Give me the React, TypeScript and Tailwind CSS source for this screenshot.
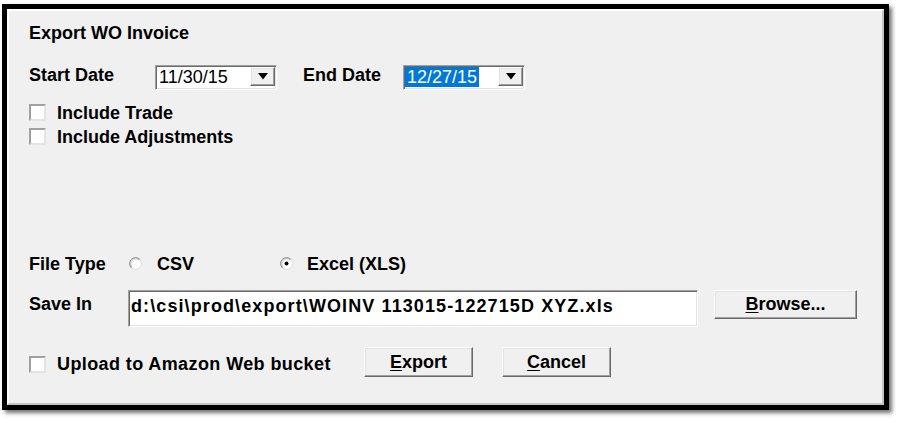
import React from 'react';

const sunken =
  'border border-t-[#a0a0a0] border-l-[#a0a0a0] border-r-white border-b-white shadow-[inset_1px_1px_0_#696969,inset_-1px_-1px_0_#e3e3e3]';
const raised =
  'border border-t-white border-l-white border-r-[#696969] border-b-[#696969] shadow-[inset_-1px_-1px_0_#a0a0a0,inset_1px_1px_0_#e3e3e3]';

function Arrow() {
  return (
    <svg width="10" height="7" viewBox="0 0 10 7">
      <polygon points="0,0 10,0 5,6.5" fill="#000" />
    </svg>
  );
}

function DateBox({ value, selected }: { value: string; selected?: boolean }) {
  return (
    <div className={`w-[122px] h-[25px] mt-[1px] bg-white flex justify-between ${sunken}`}>
      <div className="pl-[1px] pt-[1px]">
        <span
          className={`block text-[18px] leading-[20px] font-normal px-[2px] ${
            selected ? 'bg-[#0078d7] text-white' : 'text-black'
          }`}
        >
          {value}
        </span>
      </div>
      <div className={`w-[25px] h-[19px] mt-[1px] mr-[1px] bg-[#f0f0f0] flex items-center justify-center ${raised}`}>
        <Arrow />
      </div>
    </div>
  );
}

function Box({ top }: { top: string }) {
  return (
    <div
      className={`w-[17px] h-[17px] ${top} bg-white border-2 border-t-[#a0a0a0] border-l-[#a0a0a0] border-r-[#e3e3e3] border-b-[#e3e3e3] shrink-0`}
    />
  );
}

function Check({ label, top }: { label: string; top?: string }) {
  return (
    <div className={`flex items-start h-[22px] ${top ?? ''}`}>
      <Box top="mt-[2px]" />
      <span className="ml-[11px] leading-[22px]">{label}</span>
    </div>
  );
}

function Radio({ on }: { on?: boolean }) {
  return (
    <svg width="13" height="13" viewBox="0 0 13 13" className="mt-[4px] shrink-0">
      <circle cx="6.5" cy="6.5" r="6" fill="#fff" stroke="#dcdcdc" />
      <path d="M2.26 10.74 A6 6 0 0 1 10.74 2.26" stroke="#8a8a8a" fill="none" />
      <path d="M2.97 10.03 A5 5 0 0 1 10.03 2.97" stroke="#b4b4b4" fill="none" />
      {on && <circle cx="6.5" cy="6.5" r="2" fill="#000" />}
    </svg>
  );
}

function Button({ w, h, ul, rest }: { w: string; h: string; ul: string; rest: string }) {
  return (
    <div className={`${w} ${h} bg-[#f0f0f0] flex items-center justify-center ${raised}`}>
      <span>
        <span className="underline underline-offset-2">{ul}</span>
        {rest}
      </span>
    </div>
  );
}

export default function App() {
  return (
    <div className="w-[902px] h-[423px] bg-white pl-[2px] pt-[4px] overflow-hidden font-['Liberation_Sans',Arial,sans-serif] font-bold text-[18px] text-black">
      <div className="w-[887px] h-[406px] border-[5px] border-black shadow-[3px_3px_4px_rgba(0,0,0,0.55)]">
        <div className="w-full h-full bg-[#f0f0f0] border-2 border-t-white border-l-white border-r-[#c4c4c4] border-b-[#c4c4c4] pl-[20px]">
          <div className="mt-[11px] leading-[22px]">Export WO Invoice</div>

          <div className="flex items-start mt-[20px]">
            <span className="w-[126px] leading-[22px]">Start Date</span>
            <DateBox value="11/30/15" />
            <span className="ml-[26px] w-[100px] leading-[22px]">End Date</span>
            <DateBox value="12/27/15" selected />
          </div>

          <Check label="Include Trade" top="mt-[12px]" />
          <Check label="Include Adjustments" top="mt-[2px]" />

          <div className="flex items-start mt-[105px] h-[22px]">
            <span className="w-[100px] leading-[22px]">File Type</span>
            <div className="w-[151px] flex items-start">
              <Radio />
              <span className="ml-[15px] leading-[22px]">CSV</span>
            </div>
            <Radio on />
            <span className="ml-[14px] leading-[22px]">Excel (XLS)</span>
          </div>

          <div className="flex items-start mt-[15px]">
            <span className="w-[99px] mt-[3px] leading-[22px]">Save In</span>
            <div className={`w-[570px] h-[37px] bg-white pl-[2px] pt-[2px] ${sunken}`}>
              <span className="leading-[22px] tracking-[1.1px]">d:\csi\prod\export\WOINV 113015-122715D XYZ.xls</span>
            </div>
            <div className="ml-[16px]">
              <Button w="w-[143px]" h="h-[29px]" ul="B" rest="rowse..." />
            </div>
          </div>

          <div className="flex items-start mt-[20px]">
            <div className="w-[335px] flex items-start">
              <Box top="mt-[9px]" />
              <span className="ml-[11px] mt-[6px] leading-[22px] tracking-[0.4px]">Upload to Amazon Web bucket</span>
            </div>
            <Button w="w-[109px]" h="h-[30px]" ul="E" rest="xport" />
            <div className="ml-[29px]">
              <Button w="w-[109px]" h="h-[30px]" ul="C" rest="ancel" />
            </div>
          </div>
        </div>
      </div>
    </div>
  );
}
